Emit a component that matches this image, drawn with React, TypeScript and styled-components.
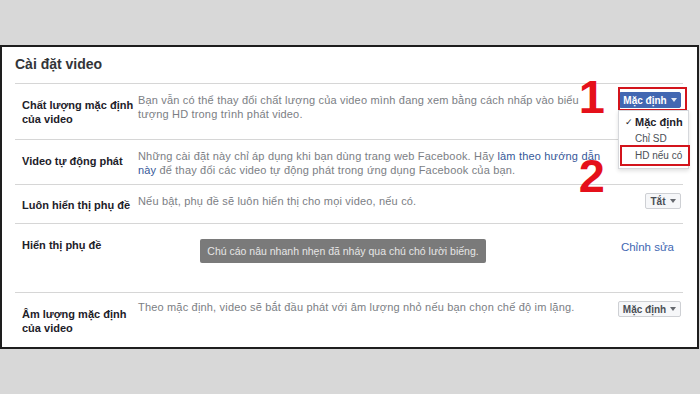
import React from 'react';
import styled, { createGlobalStyle } from 'styled-components';

const GlobalStyle = createGlobalStyle`
  html, body {
    margin: 0;
    padding: 0;
    background: #d8d8d8;
  }
  body {
    font-family: "Liberation Sans", Arial, sans-serif;
  }
`;

const Page = styled.div`
  width: 700px;
  height: 394px;
  padding-top: 45px;
  box-sizing: border-box;
  overflow: hidden;
`;

const Card = styled.div`
  width: 699px;
  height: 304px;
  box-sizing: border-box;
  background: #fff;
  border: 2px solid #1e1e1e;
  padding: 0 14px 0 13px;
`;

const Title = styled.h2`
  margin: 0;
  height: 37px;
  box-sizing: border-box;
  padding-top: 8px;
  font-size: 14px;
  line-height: 18px;
  font-weight: 700;
  color: #333538;
  border-bottom: 1px solid #d6d6d6;
`;

const Row = styled.div<{ $h?: number; $last?: boolean }>`
  display: grid;
  grid-template-columns: 116px 466px 1fr;
  padding-left: 7px;
  box-sizing: border-box;
  height: ${(p) => (p.$h ? `${p.$h}px` : 'auto')};
  border-bottom: ${(p) => (p.$last ? 'none' : '1px solid #d6d6d6')};
`;

const Label = styled.div<{ $pad?: number }>`
  padding-top: ${(p) => p.$pad ?? 14}px;
  font-size: 11px;
  line-height: 14px;
  font-weight: 700;
  color: #1d2129;
`;

const Desc = styled.div<{ $pad?: number }>`
  padding-top: ${(p) => p.$pad ?? 9}px;
  font-size: 11px;
  letter-spacing: 0.18px;
  line-height: 14px;
  color: #7b7e84;
`;

const Link = styled.a`
  color: #365899;
  text-decoration: none;
`;

const Control = styled.div`
  display: flex;
  justify-content: flex-end;
  align-items: flex-start;
  padding: 8px 2px 0 0;
`;

const SelectButton = styled.div<{ $primary?: boolean; $w: number }>`
  position: relative;
  width: ${(p) => p.$w}px;
  height: 16px;
  box-sizing: border-box;
  display: flex;
  align-items: center;
  justify-content: center;
  gap: 4px;
  font-size: 10px;
  font-weight: 700;
  border-radius: 2px;
  color: ${(p) => (p.$primary ? '#fff' : '#4b4f56')};
  background: ${(p) => (p.$primary ? '#4267b2' : '#f6f7f9')};
  border: 1px solid ${(p) => (p.$primary ? '#4267b2' : '#ced0d4')};
`;

const Caret = styled.span`
  width: 0;
  height: 0;
  border-left: 3px solid transparent;
  border-right: 3px solid transparent;
  border-top: 4px solid currentColor;
  opacity: 0.85;
`;

const MarkBox = styled.div`
  position: absolute;
  top: -6px;
  right: -7px;
  bottom: -4px;
  left: -2px;
  border: 2px solid #d3141c;
  pointer-events: none;
`;

const StepNumber = styled.div<{ $top: number }>`
  position: absolute;
  top: ${(p) => p.$top}px;
  right: calc(100% + 15px);
  font-family: "Liberation Sans", Arial, sans-serif;
  font-size: 47px;
  line-height: 34px;
  font-weight: 700;
  color: #e5101a;
`;

const Menu = styled.div`
  position: absolute;
  top: calc(100% + 3px);
  left: -2px;
  width: 71px;
  height: 59px;
  box-sizing: border-box;
  padding-top: 2px;
  background: #fff;
  border: 1px solid #d6d8dc;
  box-shadow: 0 2px 4px rgba(0, 0, 0, 0.12);
  z-index: 2;
`;

const MenuItem = styled.div<{ $marked?: boolean; $checked?: boolean }>`
  height: 17px;
  margin-left: ${(p) => (p.$marked ? '3px' : '0')};
  padding-left: ${(p) => (p.$marked ? '13px' : '16px')};
  display: flex;
  align-items: center;
  position: relative;
  font-size: ${(p) => (p.$checked ? '11px' : '10px')};
  font-weight: ${(p) => (p.$checked ? 700 : 400)};
  color: ${(p) => (p.$checked ? '#1d2129' : '#4b4f56')};
  outline: ${(p) => (p.$marked ? '2px solid #d3141c' : 'none')};
`;

const Check = styled.span`
  position: absolute;
  left: 6px;
  font-size: 9px;
  font-weight: 400;
`;

const CaptionPreview = styled.div`
  display: inline-block;
  margin: 6px 0 0 62px;
  width: 286px;
  height: 24px;
  box-sizing: border-box;
  padding-top: 5px;
  text-align: center;
  font-size: 10.5px;
  letter-spacing: 0;
  line-height: 14px;
  color: #e6e6e6;
  background: #7a7a7a;
  border-radius: 2px;
`;

const EditLink = styled.a`
  padding: 16px 9px 0 0;
  font-size: 11.5px;
  line-height: 14px;
  color: #4267b2;
  text-decoration: none;
  text-align: right;
`;

const App: React.FC = () => {
  return (
    <Page>
      <GlobalStyle />
      <Card>
        <Title>Cài đặt video</Title>

        <Row $h={56}>
          <Label>
            Chất lượng mặc định
            <br />
            của video
          </Label>
          <Desc>
            Bạn vẫn có thể thay đổi chất lượng của video mình đang xem bằng cách nhấp vào biểu
            tượng HD trong trình phát video.
          </Desc>
          <Control>
            <SelectButton $primary $w={62}>
              Mặc định <Caret />
              <MarkBox />
              <StepNumber $top={-13}>1</StepNumber>
              <StepNumber $top={66}>2</StepNumber>
              <Menu>
                <MenuItem $checked>
                  <Check>✓</Check>
                  Mặc định
                </MenuItem>
                <MenuItem>Chỉ SD</MenuItem>
                <MenuItem $marked>HD nếu có</MenuItem>
              </Menu>
            </SelectButton>
          </Control>
        </Row>

        <Row $h={45}>
          <Label>Video tự động phát</Label>
          <Desc>
            Những cài đặt này chỉ áp dụng khi bạn dùng trang web Facebook. Hãy{' '}
            <Link href="#">làm theo hướng dẫn này</Link> để thay đổi các video tự động phát trong
            ứng dụng Facebook của bạn.
          </Desc>
          <Control />
        </Row>

        <Row $h={39}>
          <Label $pad={13}>Luôn hiển thị phụ đề</Label>
          <Desc>Nếu bật, phụ đề sẽ luôn hiển thị cho mọi video, nếu có.</Desc>
          <Control>
            <SelectButton $w={36}>
              Tắt <Caret />
            </SelectButton>
          </Control>
        </Row>

        <Row $h={69}>
          <Label>Hiển thị phụ đề</Label>
          <Desc>
            <CaptionPreview>Chú cáo nâu nhanh nhẹn đã nháy qua chú chó lười biếng.</CaptionPreview>
          </Desc>
          <EditLink href="#">Chỉnh sửa</EditLink>
        </Row>

        <Row $last>
          <Label>
            Âm lượng mặc định
            <br />
            của video
          </Label>
          <Desc $pad={7}>
            Theo mặc định, video sẽ bắt đầu phát với âm lượng nhỏ nếu bạn chọn chế độ im lặng.
          </Desc>
          <Control>
            <SelectButton $w={63}>
              Mặc định <Caret />
            </SelectButton>
          </Control>
        </Row>
      </Card>
    </Page>
  );
};

export default App;
